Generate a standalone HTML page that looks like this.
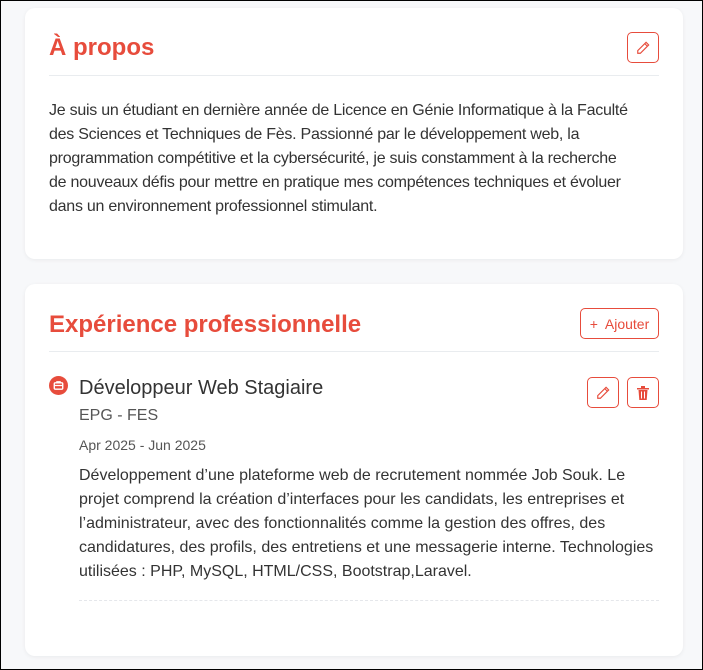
<!DOCTYPE html>
<html><head><meta charset="utf-8"><style>
*{box-sizing:border-box;margin:0;padding:0}
html,body{width:703px;height:670px;overflow:hidden}
body{background:#f7f8fa;border:1px solid #000;font-family:"Liberation Sans",sans-serif;position:relative}
.card{position:absolute;left:24px;width:658px;background:#fff;border-radius:10px;box-shadow:0 1px 4px rgba(0,0,0,.06)}
h2{position:absolute;left:24px;color:#e74c3c;font-size:24px;font-weight:bold}
.hr{position:absolute;left:24px;right:24px;height:1px;background:#e9ecef}
.btn{position:absolute;border:1px solid #e74c3c;border-radius:5px;color:#e74c3c;display:flex;align-items:center;justify-content:center;font-size:14px}
p{position:absolute;font-size:16px;line-height:24px;color:#333}
</style></head><body>
<div class="card" style="top:7px;height:251px">
<h2 style="top:26px">À propos</h2>
<div class="btn" style="left:602px;top:24px;width:32px;height:31px"><svg width="14" height="14" viewBox="0 0 16 16" fill="none" stroke="#e74c3c" stroke-width="1.3"><path d="M11.5 1.5l3 3L5 14H2v-3z M10 3l3 3"/></svg></div>
<div class="hr" style="top:67px"></div>
<p style="left:24px;top:91px;width:584px;letter-spacing:-0.25px">Je suis un étudiant en dernière année de Licence en Génie Informatique à la Faculté des Sciences et Techniques de Fès. Passionné par le développement web, la programmation compétitive et la cybersécurité, je suis constamment à la recherche de nouveaux défis pour mettre en pratique mes compétences techniques et évoluer dans un environnement professionnel stimulant.</p>
</div>
<div class="card" style="top:283px;height:372px">
<h2 style="top:27px">Expérience professionnelle</h2>
<div class="btn" style="left:555px;top:24px;width:79px;height:31px">+&nbsp; Ajouter</div>
<div class="hr" style="top:67px"></div>
<div style="position:absolute;left:24px;top:92px;width:19px;height:19px;border-radius:50%;background:#e74c3c"><svg width="19" height="19" viewBox="0 0 18 18" fill="none" stroke="#fff" stroke-width="1.3"><rect x="5" y="6.5" width="8" height="6" rx="1"/><path d="M7.5 6.5V5.5h3v1 M5 9h8"/></svg></div>
<div style="position:absolute;left:54px;top:93px;font-size:20px;color:#333">Développeur Web Stagiaire</div>
<div class="btn" style="left:562px;top:93px;width:32px;height:31px"><svg width="14" height="14" viewBox="0 0 16 16" fill="none" stroke="#e74c3c" stroke-width="1.3"><path d="M11.5 1.5l3 3L5 14H2v-3z M10 3l3 3"/></svg></div>
<div class="btn" style="left:602px;top:93px;width:32px;height:31px"><svg width="12" height="14" viewBox="0 0 12 14" fill="#e74c3c"><rect x="0" y="2" width="12" height="1.5"/><rect x="4" y="0" width="4" height="2"/><path d="M1.5 4h9l-.8 10H2.3z"/><rect x="4" y="5.5" width="1" height="7" fill="#fff"/><rect x="7" y="5.5" width="1" height="7" fill="#fff"/></svg></div>
<div style="position:absolute;left:54px;top:123px;font-size:16px;color:#555">EPG - FES</div>
<div style="position:absolute;left:54px;top:153px;font-size:14px;color:#555">Apr 2025 - Jun 2025</div>
<p style="left:54px;top:180px;width:585px">Développement d’une plateforme web de recrutement nommée Job Souk. Le projet comprend la création d’interfaces pour les candidats, les entreprises et l’administrateur, avec des fonctionnalités comme la gestion des offres, des candidatures, des profils, des entretiens et une messagerie interne. Technologies utilisées : PHP, MySQL, HTML/CSS, Bootstrap,Laravel.</p>
<div style="position:absolute;left:54px;right:24px;top:316px;border-top:1px dashed #e5e7eb"></div>
</div>
</body></html>
